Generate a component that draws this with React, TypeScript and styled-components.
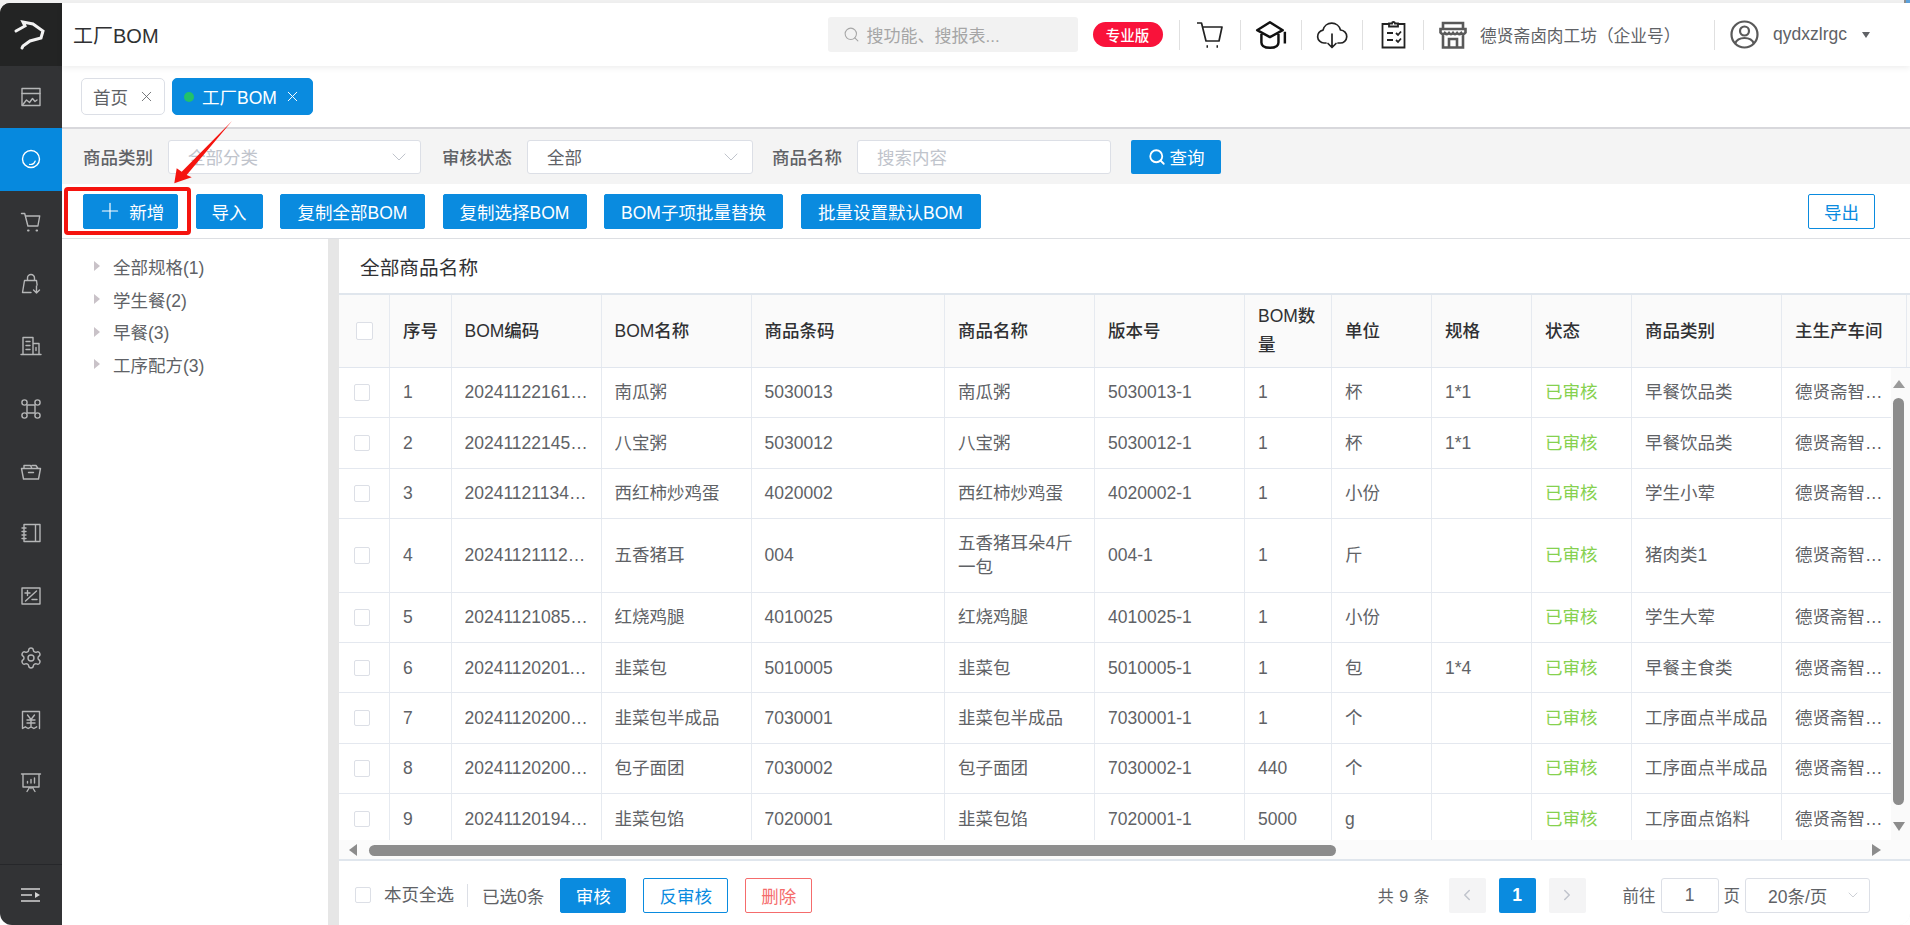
import React from 'react';
import styled, { createGlobalStyle } from 'styled-components';
import { ChevronDown, ChevronLeft, ChevronRight, Plus, Search, Settings, X } from 'lucide-react';

const BLUE = '#0a8bdf';
const COLUMNS = '51px 61.5px 150px 150px 193.5px 150px 150px 87px 100px 100px 100px 150px 125px';

const GlobalStyle = createGlobalStyle`
  html, body {
    margin: 0;
    padding: 0;
    background: #fff;
  }
  body {
    font-family: "Liberation Sans", "Noto Sans CJK SC", sans-serif;
    font-size: 17.5px;
    color: #606266;
  }
  * {
    box-sizing: border-box;
  }
`;

const Page = styled.div`
  position: relative;
  width: 1910px;
  height: 925px;
  overflow: hidden;
`;

const Shell = styled.div`
  display: flex;
  width: 100%;
  height: 100%;
  padding-top: 3px;
  background: #f1f1f1;
  border-radius: 0 0 12px 12px;
  overflow: hidden;
`;

const Sidebar = styled.nav`
  flex: none;
  width: 62px;
  display: flex;
  flex-direction: column;
  background: #323335;
  color: #b5b6b7;
  border-radius: 10px 0 0 0;
  overflow: hidden;
`;

const LogoBlock = styled.div`
  height: 63px;
  display: flex;
  align-items: center;
  justify-content: center;
  background: #232424;
`;

const MenuItem = styled.div<{ $active?: boolean }>`
  height: 62.3px;
  display: flex;
  align-items: center;
  justify-content: center;
  background: ${(p) => (p.$active ? '#0689de' : 'transparent')};
  color: ${(p) => (p.$active ? '#fff' : 'inherit')};
`;

const SideFooter = styled.div`
  margin-top: auto;
  height: 61px;
  display: flex;
  align-items: center;
  justify-content: center;
  border-top: 1px solid #26272a;
  color: #d4d4d4;
`;

const Main = styled.div`
  flex: 1;
  min-width: 0;
  display: flex;
  flex-direction: column;
  background: #fff;
`;

const Header = styled.header`
  position: relative;
  z-index: 1;
  flex: none;
  height: 63px;
  display: flex;
  align-items: center;
  padding: 0 38px 0 11px;
  background: #fff;
  box-shadow: 0 2px 6px rgba(0, 0, 0, 0.07);
`;

const PageTitle = styled.div`
  flex: 1;
  font-size: 20px;
  color: #303133;
`;

const HeaderSearch = styled.div`
  width: 250px;
  height: 35px;
  display: flex;
  align-items: center;
  gap: 7px;
  padding-left: 15px;
  background: #f2f2f2;
  border-radius: 3px;
  font-size: 17px;
  color: #a6a6a6;
`;

const ProBadge = styled.div`
  width: 70px;
  height: 25px;
  margin: 0 16.5px 0 15px;
  display: flex;
  align-items: center;
  justify-content: center;
  border-radius: 13px;
  background: #f9123a;
  color: #fff;
  font-size: 14.5px;
  font-weight: 500;
`;

const IconCell = styled.div`
  width: 61px;
  height: 30px;
  display: flex;
  align-items: center;
  justify-content: center;
  border-left: 1px solid #e0e0e0;
`;

const ShopCell = styled.div`
  height: 30px;
  width: 291px;
  display: flex;
  align-items: center;
  gap: 13px;
  padding-left: 15px;
  border-left: 1px solid #e0e0e0;
  font-size: 16.7px;
  color: #606266;
`;

const UserCell = styled.div`
  height: 30px;
  display: flex;
  align-items: center;
  border-left: 1px solid #e0e0e0;
  padding-left: 15px;
  font-size: 17.5px;
  color: #606266;
`;

const UserName = styled.span`
  margin: 0 15px 0 14px;
`;

const Caret = styled.span`
  width: 0;
  height: 0;
  margin-right: 2px;
  border-left: 4.5px solid transparent;
  border-right: 4.5px solid transparent;
  border-top: 6px solid #606266;
`;

const TabBar = styled.div`
  flex: none;
  height: 63px;
  display: flex;
  align-items: flex-start;
  gap: 7px;
  padding: 12px 0 0 19px;
  border-bottom: 2px solid #d8d8dc;
`;

const Tab = styled.div<{ $active?: boolean }>`
  height: 37px;
  width: ${(p) => (p.$active ? 141 : 84)}px;
  display: flex;
  align-items: center;
  gap: ${(p) => (p.$active ? 7 : 10)}px;
  padding-left: 11px;
  border: 1px solid ${(p) => (p.$active ? BLUE : '#dcdfe6')};
  border-radius: 5px;
  background: ${(p) => (p.$active ? BLUE : '#fff')};
  color: ${(p) => (p.$active ? '#fff' : '#606266')};
`;

const TabDot = styled.span`
  width: 10px;
  height: 10px;
  margin-right: 1px;
  border-radius: 50%;
  background: #22c16b;
`;

const FilterBar = styled.div`
  flex: none;
  height: 55px;
  display: flex;
  align-items: center;
  padding-left: 21px;
  background: #f4f4f4;
`;

const FilterLabel = styled.label<{ $gap?: number }>`
  width: 85px;
  margin-left: ${(p) => p.$gap ?? 0}px;
  font-weight: 500;
  color: #606266;
`;

const Field = styled.div<{ $w: number; $muted?: boolean }>`
  width: ${(p) => p.$w}px;
  height: 34px;
  display: flex;
  align-items: center;
  justify-content: space-between;
  padding: 0 9px 0 19px;
  background: #fff;
  border: 1px solid #dcdfe6;
  border-radius: 3px;
  color: ${(p) => (p.$muted ? '#c0c4cc' : '#606266')};
`;

const QueryButton = styled.button`
  width: 90px;
  height: 34px;
  margin-left: 20px;
  display: flex;
  align-items: center;
  justify-content: center;
  gap: 4px;
  border: 0;
  border-radius: 2px;
  background: ${BLUE};
  color: #fff;
  font: inherit;
`;

const Toolbar = styled.div`
  flex: none;
  height: 55px;
  display: flex;
  align-items: center;
  gap: 17.5px;
  padding: 0 35px 0 21px;
  border-bottom: 1px solid #dddfe3;
`;

const ActionButton = styled.button<{ $w: number; $tone?: 'solid' | 'outline' | 'danger' }>`
  flex: none;
  width: ${(p) => p.$w}px;
  height: 35px;
  display: flex;
  align-items: center;
  justify-content: center;
  gap: 6.5px;
  padding: 0;
  border-radius: 2px;
  font: inherit;
  border: 1px solid ${(p) => (p.$tone === 'danger' ? '#f56c6c' : BLUE)};
  background: ${(p) => (p.$tone === 'outline' || p.$tone === 'danger' ? '#fff' : BLUE)};
  color: ${(p) => (p.$tone === 'danger' ? '#f56c6c' : p.$tone === 'outline' ? BLUE : '#fff')};
`;

const ExportSlot = styled.div`
  margin-left: auto;
`;

const Workspace = styled.div`
  flex: 1;
  min-height: 0;
  display: flex;
`;

const Tree = styled.ul`
  flex: none;
  width: 266px;
  margin: 0;
  padding: 11px 0 0 32px;
  list-style: none;
`;

const TreeItem = styled.li`
  height: 32.7px;
  display: flex;
  align-items: center;
  gap: 13px;
`;

const TreeArrow = styled.span`
  width: 0;
  height: 0;
  border-top: 5px solid transparent;
  border-bottom: 5px solid transparent;
  border-left: 6px solid #c9c2c8;
`;

const Splitter = styled.div`
  flex: none;
  width: 11px;
  background: #e6e6e6;
`;

const Panel = styled.section`
  flex: 1;
  min-width: 0;
  display: flex;
  flex-direction: column;
`;

const PanelTitle = styled.div`
  flex: none;
  height: 56px;
  display: flex;
  align-items: center;
  padding-left: 21px;
  font-size: 19.7px;
  color: #303133;
  border-bottom: 2px solid #e0e6ed;
`;

const HeadRow = styled.div`
  flex: none;
  height: 73px;
  display: grid;
  grid-template-columns: ${COLUMNS};
  background: #fafafa;
  border-bottom: 1px solid #e1e6ee;
`;

const HeadCell = styled.div<{ $check?: boolean }>`
  display: flex;
  align-items: center;
  padding-left: ${(p) => (p.$check ? 16.5 : 13)}px;
  padding-right: 8px;
  border-right: 1px solid #e6eaf0;
  line-height: 29px;
  font-weight: 500;
  color: #303133;
`;

const BodyArea = styled.div`
  flex: none;
  height: 472px;
  display: flex;
`;

const Rows = styled.div`
  flex: 1;
  min-width: 0;
  overflow: hidden;
`;

const Row = styled.div<{ $tall?: boolean }>`
  display: grid;
  grid-template-columns: ${COLUMNS};
  height: ${(p) => (p.$tall ? 73.5 : 50.4)}px;
  border-bottom: 1px solid #e4e8ef;
`;

const Cell = styled.div<{ $check?: boolean }>`
  min-width: 0;
  display: flex;
  align-items: center;
  padding: 0 12.5px 0 ${(p) => (p.$check ? 14.5 : 13)}px;
  border-right: 1px solid #e6eaf0;
  line-height: 24.5px;
`;

const CellText = styled.span<{ $wrap?: boolean; $ok?: boolean }>`
  min-width: 0;
  overflow: hidden;
  text-overflow: ellipsis;
  white-space: ${(p) => (p.$wrap ? 'normal' : 'nowrap')};
  color: ${(p) => (p.$ok ? '#86d14f' : 'inherit')};
`;

const Check = styled.span<{ $size?: number }>`
  flex: none;
  display: inline-block;
  width: ${(p) => p.$size ?? 16.5}px;
  height: ${(p) => p.$size ?? 16.5}px;
  background: #fff;
  border: 1px solid #dcdfe6;
  border-radius: 2px;
`;

const VScroll = styled.div`
  flex: none;
  width: 19px;
  display: flex;
  flex-direction: column;
  align-items: center;
  padding: 12px 4px 9px 0;
  background: #fafafa;
`;

const ScrollThumbV = styled.div`
  flex: 1;
  width: 11px;
  margin: 10px 0 17px;
  border-radius: 6px;
  background: #8c8c8c;
`;

const ArrowUp = styled.span`
  width: 0;
  height: 0;
  border-left: 6px solid transparent;
  border-right: 6px solid transparent;
  border-bottom: 8px solid #9a9a9a;
`;

const ArrowDown = styled.span`
  width: 0;
  height: 0;
  border-left: 6px solid transparent;
  border-right: 6px solid transparent;
  border-top: 9px solid #8c8c8c;
`;

const HScroll = styled.div`
  flex: none;
  height: 19px;
  display: flex;
  align-items: center;
  padding: 1px 29px 0 10px;
  background: #fbfbfb;
`;

const ArrowLeft = styled.span`
  width: 0;
  height: 0;
  border-top: 6px solid transparent;
  border-bottom: 6px solid transparent;
  border-right: 8px solid #8c8c8c;
`;

const ArrowRight = styled.span`
  margin-left: auto;
  width: 0;
  height: 0;
  border-top: 6px solid transparent;
  border-bottom: 6px solid transparent;
  border-left: 9px solid #8c8c8c;
`;

const ScrollThumbH = styled.div`
  width: 967px;
  height: 11px;
  margin-left: 12px;
  border-radius: 6px;
  background: #8c8c8c;
`;

const Footer = styled.footer`
  flex: 1;
  display: flex;
  align-items: center;
  justify-content: space-between;
  padding: 4px 40px 0 15.5px;
  border-top: 2px solid #e0e6ed;
`;

const FooterLeft = styled.div`
  display: flex;
  align-items: center;
`;

const SelectAll = styled.span`
  margin-left: 13px;
  padding-right: 13px;
  height: 23px;
  line-height: 23px;
  border-right: 1px solid #dcdfe6;
`;

const Selected = styled.span`
  margin: 0 16px 0 14px;
`;

const FooterActions = styled.div`
  display: flex;
  gap: 17px;
`;

const Pager = styled.div`
  display: flex;
  align-items: center;
  font-size: 16px;
`;

const Total = styled.span`
  margin-right: 19px;
  word-spacing: 1px;
`;

const PageButton = styled.div<{ $active?: boolean }>`
  width: 37px;
  height: 35px;
  margin-right: 13px;
  display: flex;
  align-items: center;
  justify-content: center;
  border-radius: 2px;
  background: ${(p) => (p.$active ? BLUE : '#f4f4f5')};
  color: ${(p) => (p.$active ? '#fff' : '#c0c4cc')};
  font-weight: 700;
  font-size: 17.5px;
`;

const PagerLabel = styled.span<{ $left?: number; $right?: number }>`
  margin: 0 ${(p) => p.$right ?? 0}px 0 ${(p) => p.$left ?? 0}px;
  font-size: 16.5px;
`;

const PageInput = styled.div`
  width: 58px;
  height: 35px;
  display: flex;
  align-items: center;
  justify-content: center;
  border: 1px solid #dcdfe6;
  border-radius: 3px;
  font-size: 17.5px;
`;

const SizeSelect = styled.div`
  width: 125px;
  height: 35px;
  display: flex;
  align-items: center;
  justify-content: space-between;
  padding: 0 8px 0 22px;
  border: 1px solid #dcdfe6;
  border-radius: 3px;
  font-size: 17.5px;
`;

const WindowEdge = styled.div`
  position: absolute;
  top: -4px;
  right: -6px;
  width: 12px;
  height: 39px;
  background: #5da2dc;
  border: 2px solid #8f8f8f;
  border-radius: 4px;
`;

const RedBox = styled.div`
  position: absolute;
  left: 64px;
  top: 187px;
  width: 127px;
  height: 48px;
  border: 4px solid #f5140f;
  border-radius: 4px;
  pointer-events: none;
`;

const RedArrow = styled.svg`
  position: absolute;
  left: 0;
  top: 0;
  pointer-events: none;
`;

// sidebar drawings, all on a 24 box
const Ico = ({ children, size = 24 }: { children: React.ReactNode; size?: number }) => (
  <svg width={size} height={size} viewBox="0 0 24 24" fill="none" stroke="currentColor" strokeWidth="1.4" strokeLinecap="round" strokeLinejoin="round">
    {children}
  </svg>
);

const sideIcons: React.ReactNode[] = [
  <Ico key="chart">
    <rect x="3" y="3.5" width="18" height="17" />
    <path d="M3 8.5h18M3.5 20l4-5 3 2.5 3-4 2.5 3 2-1.500" />
  </Ico>,
  <Ico key="circle">
    <circle cx="12" cy="12" r="8.500" />
    <path d="M10.500 17.400c2.800.4 5-1.200 5.700-3.400" strokeWidth="1.200" />
  </Ico>,
  <Ico key="cart">
    <path d="M2.500 3.500h3.200l3.200 12.500h10l1.800-10H7" />
    <path d="M9 20.500h.6M17.500 20.500h.6" strokeWidth="2" />
  </Ico>,
  <Ico key="bag">
    <path d="M12 20.500H3.500L5.500 8.500h12l.6 4.500M8.500 8.500V6a3.500 3.500 0 0 1 7 0v2.500" />
    <path d="M17.500 14v7M14.500 18l3 3 3-3" />
  </Ico>,
  <Ico key="building">
    <path d="M2 20.500h20M4 20.500V3.500h10v17M14 9.500h6v11M7 7.500h4M7 11.500h4M7 15.500h4M17 13.500v3" />
  </Ico>,
  <Ico key="nodes">
    <circle cx="5.500" cy="5.500" r="2.600" />
    <circle cx="18.500" cy="5.500" r="2.600" />
    <circle cx="5.500" cy="18.500" r="2.600" />
    <circle cx="18.500" cy="18.500" r="2.600" />
    <rect x="8" y="8" width="8" height="8" />
  </Ico>,
  <Ico key="folder">
    <path d="M2.500 9.500h19l-2 10.500H4.500zM5 9.500V6.500h6.500l1.500 3M13 6.500h4l2 3M9.500 13.500h5" />
  </Ico>,
  <Ico key="book">
    <path d="M5 3.500h16v17H5zM16.500 3.500v17M3 7h4M3 10.500h4M3 14h4M3 17.500h4" />
  </Ico>,
  <Ico key="percent">
    <rect x="3" y="4" width="18" height="16" />
    <path d="M6.500 17L17.500 7M6 9h5M8.500 6.500v5M13 15.500h5" />
  </Ico>,
  <Settings key="gear" size={24} strokeWidth={1.4} />,
  <Ico key="yen">
    <path d="M20.500 20.500V3.500h-17v17l2.800-1.700 2.900 1.700 2.800-1.700 2.900 1.700 2.800-1.700M8.500 7l3.500 4.500L15.500 7M8 12h8M8 15h8M12 11.500V18" />
  </Ico>,
  <Ico key="board">
    <path d="M2.500 4h19M4 4v13h16V4M12 17v1.500M8 21.500l2.500-4M16 21.500l-2.500-4M8.500 13v-1.500M12 13V9.500M15.500 13V8" />
  </Ico>,
];

const rows = [
  ['20241122161530', '南瓜粥', '5030013', '南瓜粥', '5030013-1', '1', '杯', '1*1', '早餐饮品类'],
  ['20241122145218', '八宝粥', '5030012', '八宝粥', '5030012-1', '1', '杯', '1*1', '早餐饮品类'],
  ['20241121134407', '西红柿炒鸡蛋', '4020002', '西红柿炒鸡蛋', '4020002-1', '1', '小份', '', '学生小荤'],
  ['20241121112936', '五香猪耳', '004', '五香猪耳朵4斤一包', '004-1', '1', '斤', '', '猪肉类1'],
  ['20241121085542', '红烧鸡腿', '4010025', '红烧鸡腿', '4010025-1', '1', '小份', '', '学生大荤'],
  ['20241120201103', '韭菜包', '5010005', '韭菜包', '5010005-1', '1', '包', '1*4', '早餐主食类'],
  ['20241120200827', '韭菜包半成品', '7030001', '韭菜包半成品', '7030001-1', '1', '个', '', '工序面点半成品'],
  ['20241120200314', '包子面团', '7030002', '包子面团', '7030002-1', '440', '个', '', '工序面点半成品'],
  ['20241120194650', '韭菜包馅', '7020001', '韭菜包馅', '7020001-1', '5000', 'g', '', '工序面点馅料'],
];

const headers = ['序号', 'BOM编码', 'BOM名称', '商品条码', '商品名称', '版本号', 'BOM数量', '单位', '规格', '状态', '商品类别', '主生产车间'];

const App: React.FC = () => {
  return (
    <Page>
      <GlobalStyle />
      <Shell>
        <Sidebar>
          <LogoBlock>
            <svg width="40" height="36" viewBox="11 16 40 36" fill="none" stroke="#f2f2f2" strokeWidth="3" strokeLinecap="round" strokeLinejoin="miter">
              <path d="M16 30l9-5-2-4 10 2 10 7-2 7-11 3-7 5-1 2" />
            </svg>
          </LogoBlock>
          {sideIcons.map((icon, i) => (
            <MenuItem key={i} $active={i === 1}>
              {icon}
            </MenuItem>
          ))}
          <SideFooter>
            <svg width="22" height="16" viewBox="0 0 22 16" fill="none" stroke="currentColor" strokeWidth="1.600">
              <path d="M1 2h19M1 8h11M1 14h19" />
              <path d="M15 5l5 3-5 3z" fill="currentColor" stroke="none" />
            </svg>
          </SideFooter>
        </Sidebar>
        <Main>
          <Header>
            <PageTitle>工厂BOM</PageTitle>
            <HeaderSearch>
              <Search size={17} strokeWidth={1.5} />
              搜功能、搜报表...
            </HeaderSearch>
            <ProBadge>专业版</ProBadge>
            <IconCell>
              <svg width="28" height="28" viewBox="0 0 28 28" fill="none" stroke="#222" strokeWidth="1.700" strokeLinejoin="round">
                <path d="M1 2h4.500l4.500 18h13l3-14H7" />
                <path d="M10.500 25.500h1.500M20.500 25.500h1.500" strokeWidth="2.400" />
              </svg>
            </IconCell>
            <IconCell>
              <svg width="32" height="30" viewBox="0 0 30 28" fill="none" stroke="#111" strokeWidth="2.300" strokeLinejoin="round">
                <path d="M14 2L2 9.500 14 16l12-6.500zM6 13v8c0 3 3 5 8 5s8-2 8-5v-8M28 11v11" />
              </svg>
            </IconCell>
            <IconCell>
              <svg width="32" height="28" viewBox="0 0 32 28" fill="none" stroke="#222" strokeWidth="1.700" strokeLinecap="round" strokeLinejoin="round">
                <path d="M10 22H8a6.500 6.500 0 0 1-1-12.900A9 9 0 0 1 24.500 9 6.500 6.500 0 0 1 24 22h-2M16 13v13M12 22.500l4 4 4-4" />
              </svg>
            </IconCell>
            <IconCell>
              <svg width="25" height="29" viewBox="0 0 25 29" fill="none" stroke="#222" strokeWidth="1.800">
                <path d="M8 4H1.500v23.500h22V4H17" />
                <path d="M8 6.500V3.500h3a1.500 1.500 0 0 1 3 0h3v3z" />
                <path d="M6 13h6M6 20h6M15 13l2 2 3-3.500M15 20l2 2 3-3.500" />
              </svg>
            </IconCell>
            <ShopCell>
              <svg width="28" height="28" viewBox="0 0 28 28" fill="none" stroke="#595959" strokeWidth="2.600">
                <path d="M4 2h20v6H4zM1.500 8h25v3.500c-1.500 2-3 2-4.200.5-1.400 1.500-3 1.500-4.200 0-1.200 1.500-3 1.500-4.100 0-1.200 1.500-2.800 1.500-4 0-1.300 1.500-2.800 1.500-4.200 0-1.200 1.500-2.800 1.500-4.300-.5zM4 13v13.500h20V13M10 26.500V18h8v8.500" />
              </svg>
              德贤斋卤肉工坊（企业号）
            </ShopCell>
            <UserCell>
              <svg width="29" height="29" viewBox="0 0 29 29" fill="none" stroke="#595959" strokeWidth="2.200">
                <circle cx="14.500" cy="14.500" r="13" />
                <circle cx="14.500" cy="11" r="4.500" />
                <path d="M5 23.500c1.500-3.500 5-5.500 9.500-5.500s8 2 9.500 5.500" />
              </svg>
              <UserName>qydxzlrgc</UserName>
              <Caret />
            </UserCell>
          </Header>

          <TabBar>
            <Tab>
              首页
              <X size={17} strokeWidth={1.200} />
            </Tab>
            <Tab $active>
              <TabDot />
              工厂BOM
              <X size={17} strokeWidth={1.400} />
            </Tab>
          </TabBar>

          <FilterBar>
            <FilterLabel>商品类别</FilterLabel>
            <Field $w={253} $muted>
              全部分类
              <ChevronDown size={24} strokeWidth={1} />
            </Field>
            <FilterLabel $gap={21}>审核状态</FilterLabel>
            <Field $w={226}>
              全部
              <ChevronDown size={24} strokeWidth={1} color="#c0c4cc" />
            </Field>
            <FilterLabel $gap={19}>商品名称</FilterLabel>
            <Field $w={254} $muted>
              搜索内容
            </Field>
            <QueryButton>
              <Search size={18} strokeWidth={2.400} />
              查询
            </QueryButton>
          </FilterBar>

          <Toolbar>
            <ActionButton $w={95}>
              <Plus size={26} strokeWidth={1.100} />
              新增
            </ActionButton>
            <ActionButton $w={67}>导入</ActionButton>
            <ActionButton $w={145}>复制全部BOM</ActionButton>
            <ActionButton $w={144}>复制选择BOM</ActionButton>
            <ActionButton $w={179}>BOM子项批量替换</ActionButton>
            <ActionButton $w={180}>批量设置默认BOM</ActionButton>
            <ExportSlot>
              <ActionButton $w={67} $tone="outline">
                导出
              </ActionButton>
            </ExportSlot>
          </Toolbar>

          <Workspace>
            <Tree>
              {['全部规格(1)', '学生餐(2)', '早餐(3)', '工序配方(3)'].map((name) => (
                <TreeItem key={name}>
                  <TreeArrow />
                  {name}
                </TreeItem>
              ))}
            </Tree>
            <Splitter />
            <Panel>
              <PanelTitle>全部商品名称</PanelTitle>
              <HeadRow>
                <HeadCell $check>
                  <Check $size={17.500} />
                </HeadCell>
                {headers.map((h) => (
                  <HeadCell key={h}>{h}</HeadCell>
                ))}
              </HeadRow>
              <BodyArea>
                <Rows>
                  {rows.map((row, i) => (
                    <Row key={row[0]} $tall={i === 3}>
                      <Cell $check>
                        <Check />
                      </Cell>
                      <Cell>{i + 1}</Cell>
                      <Cell>
                        <CellText>{row[0]}</CellText>
                      </Cell>
                      <Cell>
                        <CellText>{row[1]}</CellText>
                      </Cell>
                      <Cell>{row[2]}</Cell>
                      <Cell>
                        <CellText $wrap>{row[3]}</CellText>
                      </Cell>
                      <Cell>{row[4]}</Cell>
                      <Cell>{row[5]}</Cell>
                      <Cell>{row[6]}</Cell>
                      <Cell>{row[7]}</Cell>
                      <Cell>
                        <CellText $ok>已审核</CellText>
                      </Cell>
                      <Cell>{row[8]}</Cell>
                      <Cell>
                        <CellText>德贤斋智能工厂</CellText>
                      </Cell>
                    </Row>
                  ))}
                </Rows>
                <VScroll>
                  <ArrowUp />
                  <ScrollThumbV />
                  <ArrowDown />
                </VScroll>
              </BodyArea>
              <HScroll>
                <ArrowLeft />
                <ScrollThumbH />
                <ArrowRight />
              </HScroll>
              <Footer>
                <FooterLeft>
                  <Check />
                  <SelectAll>本页全选</SelectAll>
                  <Selected>已选0条</Selected>
                  <FooterActions>
                    <ActionButton $w={66}>审核</ActionButton>
                    <ActionButton $w={85} $tone="outline">
                      反审核
                    </ActionButton>
                    <ActionButton $w={67} $tone="danger">
                      删除
                    </ActionButton>
                  </FooterActions>
                </FooterLeft>
                <Pager>
                  <Total>共 9 条</Total>
                  <PageButton>
                    <ChevronLeft size={18} />
                  </PageButton>
                  <PageButton $active>1</PageButton>
                  <PageButton>
                    <ChevronRight size={18} />
                  </PageButton>
                  <PagerLabel $left={24} $right={5}>
                    前往
                  </PagerLabel>
                  <PageInput>1</PageInput>
                  <PagerLabel $left={5} $right={5}>
                    页
                  </PagerLabel>
                  <SizeSelect>
                    20条/页
                    <ChevronDown size={16} strokeWidth={1.200} color="#c0c4cc" />
                  </SizeSelect>
                </Pager>
              </Footer>
            </Panel>
          </Workspace>
        </Main>
      </Shell>
      <WindowEdge />
      <RedBox />
      <RedArrow width="260" height="200" viewBox="0 0 260 200">
        <path d="M232 121L186.700 175 191.700 177.300 174.300 183.300 176.700 168.300 181.700 171.700z" fill="#f5140f" />
      </RedArrow>
    </Page>
  );
};

export default App;
